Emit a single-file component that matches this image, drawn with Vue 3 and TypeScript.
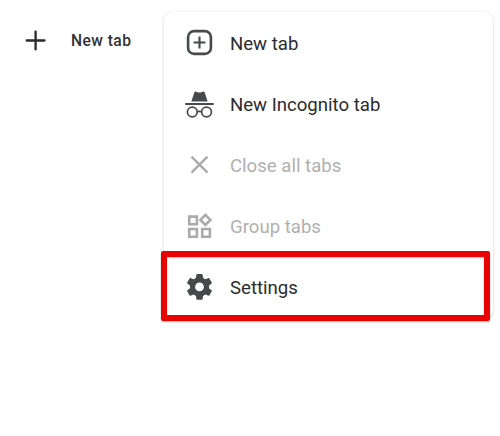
<script setup lang="ts">
type IconName = 'new' | 'incognito' | 'close' | 'group' | 'settings'

interface MenuItem {
  label: string
  icon: IconName
  disabled?: boolean
  highlighted?: boolean
}

const items: MenuItem[] = [
  { label: 'New tab', icon: 'new' },
  { label: 'New Incognito tab', icon: 'incognito' },
  { label: 'Close all tabs', icon: 'close', disabled: true },
  { label: 'Group tabs', icon: 'group', disabled: true },
  { label: 'Settings', icon: 'settings', highlighted: true },
]

const toothAngles = [0, 60, 120, 180, 240, 300]
</script>

<template>
  <main class="screen">
    <button class="new-tab" type="button">
      <svg class="plus" viewBox="0 0 22 22" aria-hidden="true">
        <path d="M10.6 1.6v17.8M1.7 10.5h17.8" />
      </svg>
      <span>New tab</span>
    </button>

    <nav class="menu">
      <div
        v-for="item in items"
        :key="item.label"
        class="item"
        :class="[item.icon, { disabled: item.disabled, highlighted: item.highlighted }]"
      >
        <svg class="icon" viewBox="0 0 31 31" aria-hidden="true">
          <g v-if="item.icon === 'new'" class="line">
            <rect x="4.1" y="4.1" width="22.8" height="22.8" rx="6" />
            <path class="thin" d="M15.5 9.6v11.8M9.6 15.5h11.8" />
          </g>
          <g v-else-if="item.icon === 'incognito'">
            <path d="M7.3 13.4 10.3 4.6q.5-1.5 2-.9l1.4.6q1.8.6 3.6 0l1.4-.6q1.5-.6 2 .9l2.9 8.8z" />
            <rect x="1.3" y="15" width="28.4" height="2" />
            <g class="line glasses">
              <circle cx="8.3" cy="24" r="4.9" />
              <circle cx="22.5" cy="24" r="4.9" />
              <path d="M13.1 23.8q2.3-.9 4.6 0" />
            </g>
          </g>
          <path v-else-if="item.icon === 'close'" class="line close-mark" d="M7.5 7.6l16 16M23.5 7.6l-16 16" />
          <g v-else-if="item.icon === 'group'" class="line">
            <path d="M5.2 6.6h7.7v7.7H5.2zM5.2 19h7.7v7.7H5.2zM18.2 19h7.7v7.7h-7.7zM21.4 4.9l5 5-5 5-5-5z" />
          </g>
          <g v-else>
            <circle class="gear-ring" cx="15.5" cy="15.9" r="7" />
            <path
              v-for="angle in toothAngles"
              :key="angle"
              :transform="`translate(0 .4) rotate(${angle} 15.5 15.5)`"
              d="M11.7 7.9 12.4 3.3q.1-.6.7-.6h4.8q.6 0 .7.6l.7 4.6z"
            />
          </g>
        </svg>
        <span class="label">{{ item.label }}</span>
      </div>
    </nav>
  </main>
</template>

<style>
body {
  margin: 0;
  background: #fff;
}
</style>

<style scoped>
.screen {
  display: flex;
  align-items: flex-start;
  box-sizing: border-box;
  width: 500px;
  height: 436px;
  padding-top: 12px;
  background: #fff;
  font-family: Roboto, "Liberation Sans", sans-serif;
  color: #2b2c2e;
}

.new-tab {
  display: flex;
  align-items: center;
  flex: none;
  box-sizing: border-box;
  width: 164px;
  height: 58px;
  padding: 0 0 0 25px;
  border: 0;
  background: none;
  font: 500 15.6px/20px Roboto, "Liberation Sans", sans-serif;
  letter-spacing: 0.45px;
  color: #303133;
  white-space: nowrap;
}

.plus {
  width: 22px;
  height: 22px;
  margin-right: 24px;
  fill: none;
  stroke: #28292a;
  stroke-width: 2.3;
  stroke-linecap: round;
}

.menu {
  width: 329px;
  height: 307px;
  border-radius: 9px;
  background: #fff;
  box-shadow: 0 1px 2px rgba(0, 0, 0, 0.15), 0 0 5px rgba(0, 0, 0, 0.07);
}

.item {
  position: relative;
  display: flex;
  align-items: center;
  box-sizing: border-box;
  height: 61px;
  padding-left: 20px;
}

.icon {
  width: 31px;
  height: 31px;
  fill: #48494b;
  color: #48494b;
}

.line {
  fill: none;
  stroke: currentColor;
  stroke-width: 2.6;
}

.thin {
  stroke-width: 2.1;
}

.glasses {
  stroke-width: 1.7;
}

.close-mark {
  stroke-width: 2.3;
}

.gear-ring {
  fill: none;
  stroke: currentColor;
  stroke-width: 5.2;
}

.label {
  margin: 2px 0 0 15px;
  font-size: 18.6px;
  line-height: 24px;
  white-space: nowrap;
}

.disabled .icon {
  color: #aaa;
}

.disabled .label {
  color: #b0b0b0;
}

.highlighted::after {
  content: "";
  position: absolute;
  box-sizing: border-box;
  top: -5px;
  left: -3px;
  width: 329px;
  height: 70px;
  border: 6px solid #e80303;
  border-radius: 2px;
  box-shadow: 0 1px 2px rgba(0, 0, 0, 0.3), inset 0 1px 2px rgba(0, 0, 0, 0.25);
}
</style>
